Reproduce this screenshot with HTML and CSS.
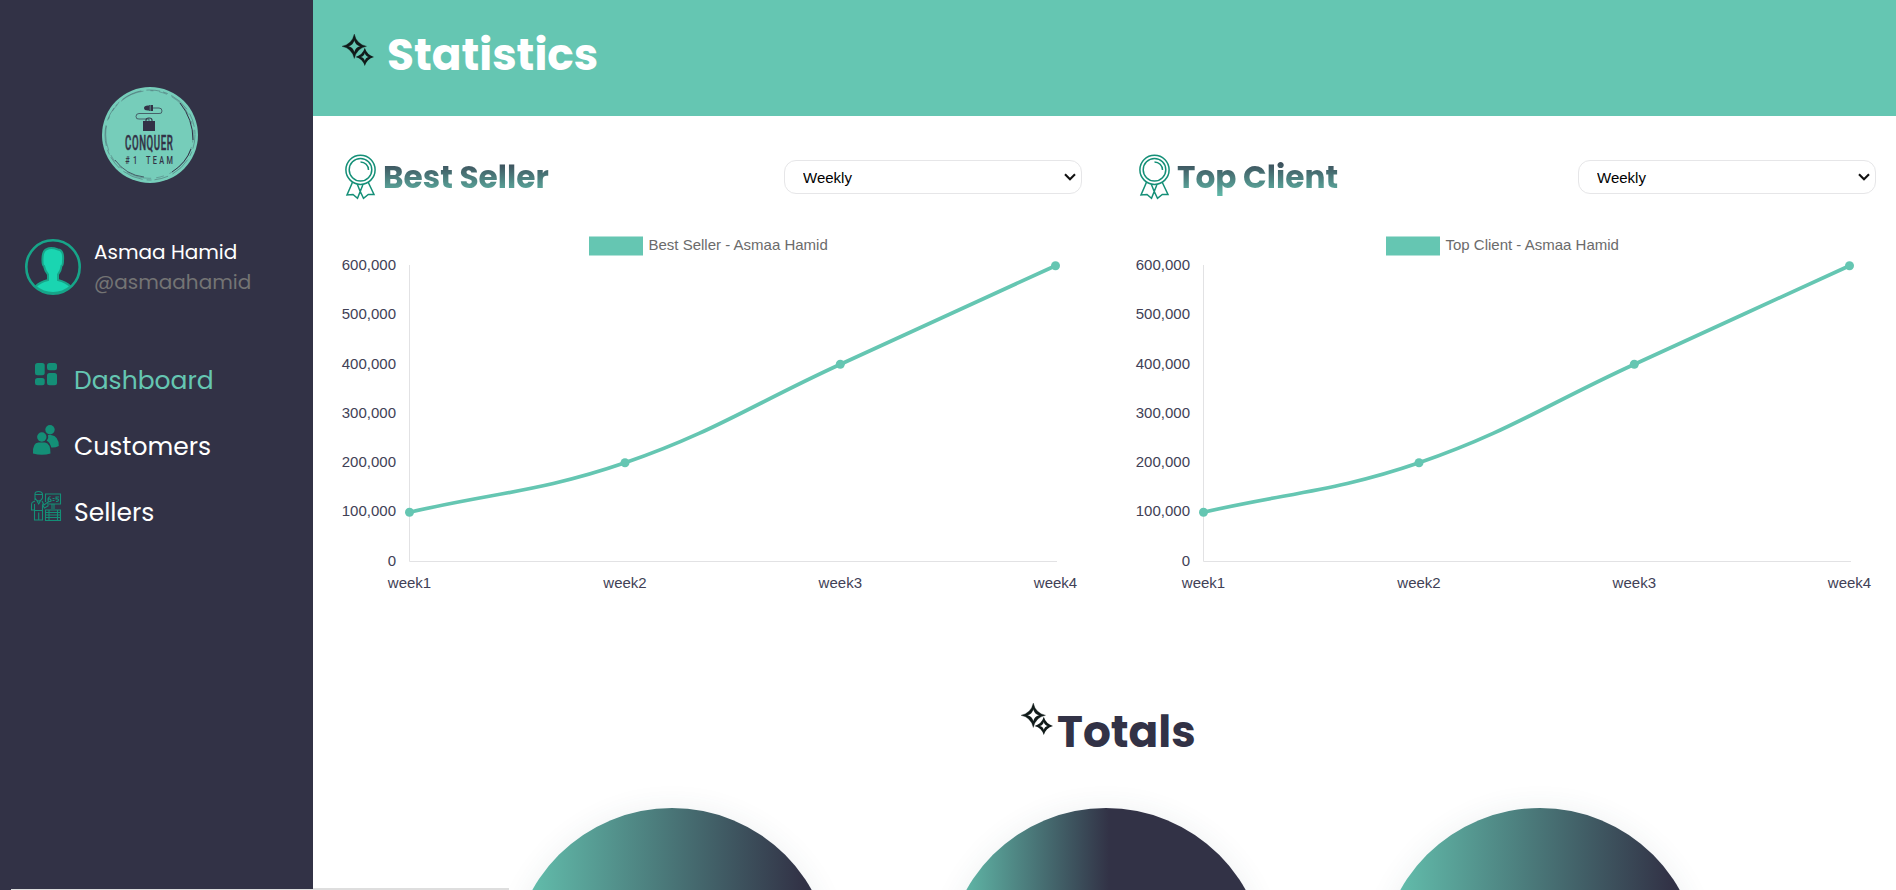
FILE: index.html
```html
<!DOCTYPE html>
<html lang="en">
<head>
<meta charset="utf-8">
<title>Statistics</title>
<link rel="stylesheet" href="styles.css">
</head>
<body>
<svg class="defs" width="0" height="0" aria-hidden="true">
  <symbol id="sparkles" viewBox="0 0 32 32">
    <g fill="#111b1a" fill-rule="evenodd">
      <path d="M12.300 0Q14.500 10.100 24.500 12.300Q14.500 14.500 12.300 24.500Q10.100 14.500 0 12.300Q10.100 10.100 12.300 0ZM12.300 6.300Q13.500 11.100 18.300 12.300Q13.500 13.500 12.300 18.300Q11.100 13.500 6.300 12.300Q11.100 11.100 12.300 6.300Z" stroke="#111b1a" stroke-width=".3"/>
      <path d="M22.800 13.800Q24.800 20.800 32 22.900Q24.800 24.900 22.800 32Q20.800 24.900 13.600 22.900Q20.800 20.800 22.800 13.800ZM22.800 19Q23.500 22.200 26.700 22.900Q23.500 23.600 22.800 26.800Q22.100 23.600 18.900 22.900Q22.100 22.200 22.800 19Z"/>
    </g>
  </symbol>
  <symbol id="award" viewBox="0 0 32 47">
    <g fill="none" stroke="#148f77" stroke-width="1.500">
      <circle cx="15.500" cy="15.800" r="14.600"/><circle cx="15.500" cy="15.800" r="11.300"/>
      <path d="M15.500 8A8 8 0 0 1 23.500 16"/>
      <path d="M7.500 28.300L2 41L8 40.500L12.500 44.300L17.800 31M23.200 28.300L29 40.500L23.300 40.500L18.500 44.300L15.500 38M12.300 30.200L15.800 39"/>
    </g>
  </symbol>
  <symbol id="line" viewBox="0 0 780 370" overflow="visible">
    <path d="M79.500 25V321.500H727" fill="none" stroke="#e2e2e4"/>
    <path d="M79.500 272.200C165.700 252.500 211.900 251.400 295 222.800C384.100 192.200 424.100 163.700 510.500 124.200C596.700 84.700 640 65 725.500 25.700" fill="none" stroke="#65c6b2" stroke-width="3.700"/>
    <g fill="#65c6b2"><circle cx="79.500" cy="272.200" r="4.500"/><circle cx="295" cy="222.800" r="4.500"/><circle cx="510.300" cy="124.200" r="4.500"/><circle cx="725.500" cy="25.800" r="4.500"/></g>
  </symbol>
</svg>
<div class="app">
  <aside class="sidebar">
    <svg class="logo" viewBox="0 0 96 96">
      <circle cx="48" cy="48" r="48" fill="#76cdba"/>
      <g fill="none" stroke="#323246">
        <circle cx="48" cy="48" r="45" stroke-width=".6" stroke-dasharray="14 3 5 4 21 5" opacity=".6"/>
        <circle cx="47.500" cy="47.500" r="43.800" stroke-width=".6" stroke-dasharray="8 5 25 7 3 6" opacity=".5"/>
        <path d="M78 16Q91 32 91 53M70 85Q84 76 89 62" stroke-width="1"/>
        <path d="M13 73Q24 88 42 90" stroke-width=".7"/>
        <path d="M51 21H57Q60 21 60 24T57 26.500H37Q34 26.500 34 29.500T37 32H47V34" stroke-width=".7"/>
        <path d="M44 35V33Q44 31 47 31T50 33V35" stroke-width="1.100"/>
      </g>
      <path d="M46 18.500H47V18H51V24H47V23.500H46Q42 23.500 42 21T46 18.500Z" fill="#323246"/><path d="M41 34H53V44H41Z" fill="#323246"/><path d="M48.200 18V24" stroke="#76cdba" stroke-width=".6"/>
      <text class="logo-name" transform="translate(23 63.200) scale(.46 1)" textLength="104">CONQUER</text>
      <g class="logo-team"><text transform="translate(23.300 76.800) scale(.7 1)" textLength="17">#1</text><text transform="translate(44 76.800) scale(.7 1)" textLength="38.500">TEAM</text></g>
    </svg>
    <div class="profile">
      <svg class="avatar" viewBox="0 0 56 56">
        <circle cx="28" cy="28" r="26.700" fill="#323246" stroke="#17a589" stroke-width="2.600"/>
        <path d="M10.500 47.500Q15 43 23 41V35.500Q20 32 19 27Q17.500 26.500 17.500 22Q17 12 22 10Q26 8 33 10.500Q39 11 38 22Q38 26.500 36.500 27Q36 32 33 35.500V41Q41 43 45.500 47.500Q38 54 28 54T10.500 47.500Z" fill="#1ad5b1" stroke="#17a589" stroke-width="2"/>
      </svg>
      <div class="who"><span class="name">Asmaa Hamid</span><span class="handle">@asmaahamid</span></div>
    </div>
    <nav class="menu">
      <a class="item active"><svg viewBox="0 0 32 32"><g fill="#148f77"><rect x="5" y="5" width="9.700" height="12.200" rx="2.500"/><rect x="17" y="5" width="10" height="7.200" rx="2.500"/><rect x="5" y="20" width="9.700" height="7.200" rx="2.500"/><rect x="17" y="15" width="10" height="12.200" rx="2.500"/></g></svg><span>Dashboard</span></a>
      <a class="item"><svg viewBox="0 0 32 32"><g fill="#148f77"><circle cx="20" cy="5.700" r="4.700"/><path d="M18 11H21Q28.800 12 28.800 22Q25 24 21.300 23.500Q20 18.500 16.700 16.800Q19 14 18 11Z"/><circle cx="11.800" cy="13" r="4.700"/><path d="M3 29.500Q2.500 18.400 8.500 18.400H15Q20.500 19 20.500 29.500Q12 32 3 29.500Z"/></g></svg><span>Customers</span></a>
      <a class="item"><svg viewBox="0 0 32 32"><g fill="none" stroke="#148f77" stroke-width="1.100">
        <path d="M5 10V4Q5 1.500 8.500 1.500T12.500 4V8Q11 11 8.700 11T5 8M5 4.500H12M5 11L3 12Q1.500 12 1.500 16V20H4M12 11L14 15L18 12V16L14.500 18L12.500 15V30H8.700V22.500M4.500 14V30H8.700M4.500 20.500H12.500M7 11L8.700 14L10.500 11"/>
        <path d="M15.500 12V4H30.500V14H19M22 14V19M24 14V19M15.500 20H30.500V30.500H15.500ZM16 22.500H30.500M16 25H30.500M16 27.500H30.500M19 20V30M27.500 20V30"/><path d="M20.500 6.500Q18 7 18 9.500T20 11.500 20.500 9.500 18.500 9.500M22.500 8.500H24.500M22.500 10.500H24.500M29 7H26V9Q28.500 8.500 28.500 10T26 11.500"/></g></svg><span>Sellers</span></a>
    </nav>
  </aside>
  <main class="main">
    <header class="topbar"><svg class="spark"><use href="#sparkles"/></svg><h1>Statistics</h1></header>
    <div class="charts">
      <section class="panel">
        <div class="panel-head"><svg class="award"><use href="#award"/></svg><h2>Best Seller</h2>
          <div class="picker"><select><option>Weekly</option></select><svg class="caret" viewBox="0 0 12 8"><path d="M1 1.200L6 6.200L11 1.200" fill="none" stroke="#111" stroke-width="2.100"/></svg></div></div>
        <svg class="chart" viewBox="0 0 780 370"><use href="#line"/><rect x="259" y="-3.500" width="54" height="19" fill="#65c6b2"/><text class="legend" x="318.500" y="10">Best Seller - Asmaa Hamid</text>
          <g class="tick" text-anchor="end"><text x="66" y="30">600,000</text><text x="66" y="79">500,000</text><text x="66" y="129">400,000</text><text x="66" y="178">300,000</text><text x="66" y="227">200,000</text><text x="66" y="276">100,000</text><text x="66" y="326">0</text></g>
          <g class="tick" text-anchor="middle"><text x="79.500" y="348">week1</text><text x="295" y="348">week2</text><text x="510.300" y="348">week3</text><text x="725.500" y="348">week4</text></g>
        </svg>
      </section>
      <section class="panel">
        <div class="panel-head"><svg class="award"><use href="#award"/></svg><h2>Top Client</h2>
          <div class="picker"><select><option>Weekly</option></select><svg class="caret" viewBox="0 0 12 8"><path d="M1 1.200L6 6.200L11 1.200" fill="none" stroke="#111" stroke-width="2.100"/></svg></div></div>
        <svg class="chart" viewBox="0 0 780 370"><use href="#line"/><rect x="262" y="-3.500" width="54" height="19" fill="#65c6b2"/><text class="legend" x="321.500" y="10">Top Client - Asmaa Hamid</text>
          <g class="tick" text-anchor="end"><text x="66" y="30">600,000</text><text x="66" y="79">500,000</text><text x="66" y="129">400,000</text><text x="66" y="178">300,000</text><text x="66" y="227">200,000</text><text x="66" y="276">100,000</text><text x="66" y="326">0</text></g>
          <g class="tick" text-anchor="middle"><text x="79.500" y="348">week1</text><text x="295" y="348">week2</text><text x="510.300" y="348">week3</text><text x="725.500" y="348">week4</text></g>
        </svg>
      </section>
    </div>
    <div class="totals-head"><svg class="spark"><use href="#sparkles"/></svg><h1>Totals</h1></div>
    <div class="totals"><div class="disc"></div><div class="disc half"></div><div class="disc"></div></div>
  </main>
</div>
<div class="status"></div>
</body>
</html>
```
FILE: styles.css
```css
* { box-sizing: border-box; }
body { margin: 0; background: #fff; overflow: hidden; font-family: Poppins, Inter, sans-serif; }
h1, h2 { margin: 0; font-weight: 700; }
.defs { display: block; height: 0; }
.app { display: flex; width: 1896px; height: 890px; overflow: hidden; }
.sidebar { width: 313px; flex: none; background: #323246; display: flex; flex-direction: column; }
.logo { width: 96px; height: 96px; margin: 87px 0 0 102px; }
.logo-name { font: 500 21px Roboto, sans-serif; fill: #323246; stroke: #323246; stroke-width: .5px; }
.logo-team { font: 500 10.500px Roboto, sans-serif; fill: #323246; }
.profile { display: flex; margin: 56px 0 0 25px; gap: 13px; height: 56px; }
.avatar { width: 56px; height: 56px; }
.who { display: flex; flex-direction: column; margin-top: -2px; line-height: 30px; font-size: 20px; }
.name { color: #fff; }
.handle { color: #747474; }
.menu { display: flex; flex-direction: column; margin-top: 51px; padding-left: 30px; }
.item { display: flex; gap: 12px; height: 66px; padding-top: 10px; color: #fff; font-size: 25px; line-height: 50px; }
.item svg { width: 32px; height: 32px; margin-top: 2px; }
.active { color: #65c6b2; }
.main { flex: 1; display: flex; flex-direction: column; }
.topbar { height: 116px; flex: none; background: #65c6b2; display: flex; padding: 25px 0 0 29px; }
.spark { width: 32px; height: 32px; flex: none; margin-top: 9px; }
.topbar h1 { color: #fff; font-size: 43.800px; line-height: 60px; margin-left: 13px; }
.charts { display: flex; height: 548px; padding-left: 17px; flex: none; }
.panel { width: 794px; flex: none; }
.panel-head { height: 124px; display: flex; padding: 37px 42px 0 15px; align-items: flex-start; }
.award { width: 32px; height: 47px; flex: none; margin-top: 1px; }
.panel-head h2 { font-size: 31.200px; line-height: 46px; margin: 1px 0 0 6px; background: linear-gradient(#323246, #65c6b2); -webkit-background-clip: text; background-clip: text; color: transparent; }
.picker { display: grid; align-items: center; justify-items: end; margin: 7px 0 0 auto; width: 298px; height: 34px; }
.picker > * { grid-area: 1 / 1; }
select { appearance: none; width: 298px; height: 34px; border: 1px solid #e6e6e8; border-radius: 12px; background: #fff; padding: 0 30px 0 18px; font: 15px "Liberation Sans", sans-serif; color: #000; }
.caret { width: 12px; height: 8px; margin-right: 6px; pointer-events: none; }
.chart { display: block; width: 780px; height: 370px; overflow: visible; font: 15px "Liberation Sans", sans-serif; }
.tick { fill: #414156; }
.legend { fill: #6b6b6b; }
.totals-head { display: flex; margin-left: 708px; height: 144px; flex: none; padding-top: 30px; color: #323246; }
.totals-head h1 { font-size: 43.800px; line-height: 76px; margin-left: 4px; }
.totals { display: flex; gap: 114px; padding-left: 199px; }
.disc { width: 320px; height: 320px; flex: none; border-radius: 50%; background: linear-gradient(90deg, #65c6b2, #323246 91%); box-shadow: 0 0 28px rgba(50, 80, 90, .08); }
.half { background: linear-gradient(90deg, #65c6b2, #323246 51%); }
.status { position: absolute; left: 11px; top: 888px; width: 498px; height: 2px; background: linear-gradient(90deg, #323246 302px, #dedede 302px) top / 100% 1px no-repeat, #dedede; }
```
